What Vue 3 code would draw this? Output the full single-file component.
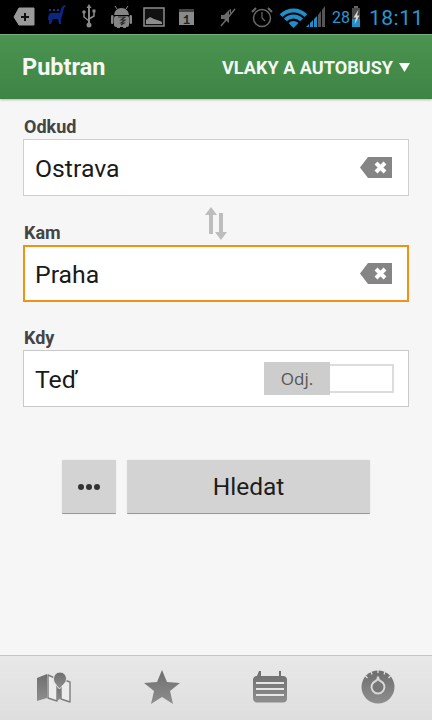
<script setup>
</script>

<template>
  <div class="app">
    <div class="status">
      <svg class="sb" width="432" height="34" viewBox="0 0 432 34">
        <!-- add -->
        <path d="M19 8h15v17H19l-5-8z" fill="#9a9a9a" stroke="#9a9a9a" stroke-width="1" stroke-linejoin="round"/>
        <path d="M25 13v8M21 17h8" stroke="#111" stroke-width="2"/>
        <!-- llama -->
        <path d="M48 20c0-4 1-7 3-7h9c1-3 1-6 3-7l1-1 2 1-2 2c-1 3-1 6-2 8l-1 3v5h-2l-1-5h-5l-2 5h-2l0-4z" fill="#0c2780"/>
        <path d="M49 10h2M53 10h2M57 10h2" stroke="#1d4cc0" stroke-width="1.5"/>
        <!-- usb -->
        <path d="M89 7v18" stroke="#8a8a8a" stroke-width="2"/>
        <path d="M89 4l-2.500 4h5z" fill="#8a8a8a"/>
        <path d="M89 21l-5-4v-4M89 19l5-3v-4" fill="none" stroke="#8a8a8a" stroke-width="1.500"/>
        <circle cx="84" cy="12" r="1.800" fill="#8a8a8a"/>
        <rect x="92.500" y="9.500" width="3" height="3" fill="#8a8a8a"/>
        <circle cx="89" cy="25" r="2.500" fill="#8a8a8a"/>
        <!-- android -->
        <path d="M114 15a7.500 7 0 0 1 15 0z" fill="#858585"/>
        <path d="M117 9l-2-3M126 9l2-3" stroke="#858585" stroke-width="1"/>
        <rect x="114" y="16" width="15" height="11" rx="2" fill="#858585"/>
        <rect x="111" y="15" width="2.500" height="9" rx="1.200" fill="#858585"/>
        <rect x="129.500" y="15" width="2.500" height="9" rx="1.200" fill="#858585"/>
        <rect x="117" y="26" width="3" height="2" fill="#858585"/>
        <rect x="123" y="26" width="3" height="2" fill="#858585"/>
        <path d="M118 17h7l-4 3h4l-4 3h3l-3 2" fill="none" stroke="#2a2a2a" stroke-width="1.200"/>
        <!-- picture -->
        <rect x="144" y="8" width="20" height="18" fill="#111" stroke="#8c8c8c" stroke-width="1.500"/>
        <path d="M146 24v-4l4-3 4 2 3 1 3 1 2 1v2z" fill="#8c8c8c"/>
        <!-- calendar -->
        <rect x="179" y="9" width="15" height="16" fill="#8a8a8a"/>
        <rect x="179" y="9" width="15" height="3" fill="#444"/>
        <text x="186.500" y="24" class="cal">1</text>
        <!-- muted -->
        <path d="M221 15h3l5-5v13l-5-4h-3z M229 10l2-1v6z" fill="#6a6a6a"/>
        <path d="M221 26l14-17" stroke="#6a6a6a" stroke-width="1.500"/>
        <!-- alarm -->
        <circle cx="262" cy="18" r="8.500" fill="none" stroke="#6a6a6a" stroke-width="1.500"/>
        <path d="M262 12v6l3 3" fill="none" stroke="#6a6a6a" stroke-width="1.200"/>
        <path d="M252 12l4-4M268 8l4 4" stroke="#6a6a6a" stroke-width="2"/>
        <!-- wifi -->
        <path d="M281.100 15.600A17.500 17.500 0 0 1 305.900 15.600" fill="none" stroke="#1f8ec9" stroke-width="4"/>
        <path d="M285.400 19.900A11.500 11.500 0 0 1 301.600 19.900" fill="none" stroke="#1f8ec9" stroke-width="4"/>
        <path d="M293.500 28L288.500 23A7 7 0 0 1 298.500 23z" fill="#1f8ec9"/>
        <!-- signal -->
        <path d="M306 27l3-3v3zM310 27v-4l3-3v7zM314 27v-8l3-3v11z" fill="#1f8ec9"/>
        <path d="M318 27V15l3-4v16zM322 27V10l3-4v21z" fill="#555"/>
        <!-- battery -->
        <rect x="354" y="6" width="4" height="2" fill="#666"/>
        <rect x="352" y="8" width="8" height="19" fill="#4a4a4a"/>
        <rect x="352" y="19" width="8" height="8" fill="#1f8ec9"/>
        <path d="M358.500 9.500l-5 8h2.500l-1.500 7 5-9h-2.500z" fill="#d8d8d8"/>
      </svg>
      <span class="pct">28</span>
      <span class="clock">18:11</span>
    </div>

    <header class="bar">
      <span class="title">Pubtran</span>
      <span class="mode">VLAKY A AUTOBUSY<svg width="11" height="9" viewBox="0 0 11 9"><path d="M0 0h11L5.500 9z" fill="#fff"/></svg></span>
    </header>

    <main class="form">
      <div class="label">Odkud</div>
      <div class="box">
        <span class="val">Ostrava</span>
        <svg class="clear" width="32" height="22" viewBox="0 0 32 22"><path d="M8 0h24v21H8L0 10.500z" fill="#858585"/><path d="M16 6l9 9M25 6l-9 9" stroke="#fff" stroke-width="4"/></svg>
      </div>
      <div class="swap">
        <svg width="24" height="33" viewBox="0 0 24 33">
          <path d="M7 0L1 8h4v19h4V8h4z" fill="#bdbdbd"/>
          <path d="M17 33l6-8h-4V6h-4v19h-4z" fill="#bdbdbd"/>
        </svg>
      </div>
      <div class="label kam">Kam</div>
      <div class="box focus">
        <span class="val">Praha</span>
        <svg class="clear" width="32" height="22" viewBox="0 0 32 22"><path d="M8 0h24v21H8L0 10.500z" fill="#858585"/><path d="M16 6l9 9M25 6l-9 9" stroke="#fff" stroke-width="4"/></svg>
      </div>
      <div class="label kdy">Kdy</div>
      <div class="box when">
        <span class="val">Teď</span>
        <div class="toggle"><span class="on">Odj.</span></div>
      </div>
      <div class="actions">
        <button class="btn more"><i></i><i></i><i></i></button>
        <button class="btn search">Hledat</button>
      </div>
    </main>

    <nav class="tabs">
      <div class="tab">
        <svg width="36" height="32" viewBox="0 0 36 32">
          <defs>
            <linearGradient id="ig" x1="0" y1="0" x2="0" y2="1"><stop offset="0" stop-color="#6e6e6e"/><stop offset="1" stop-color="#8e8e8e"/></linearGradient>
          </defs>
          <path d="M1 7l10-4v24l-10 3z" fill="url(#ig)"/>
          <path d="M12 4l9 4v22l-9-3z" fill="#ececec" stroke="#7d7d7d" stroke-width="1.400" stroke-linejoin="round"/>
          <path d="M21 18l4-4v13l-4 3z" fill="url(#ig)"/>
          <path d="M25 8l9 3v20l-9-3z" fill="#ececec" stroke="#7d7d7d" stroke-width="1.400" stroke-linejoin="round"/>
          <path d="M23.500 18c-3-4-6-6-6-10.500a6.500 6.500 0 0 1 13 0c0 4.500-4 6.500-7 10.500z" fill="url(#ig)" stroke="#e6e6e6" stroke-width="1"/>
        </svg>
      </div>
      <div class="tab">
        <svg width="36" height="34" viewBox="0 0 36 34">
          <path d="M18 0l5 12 13 1-10 8 3 13-11-7-11 7 3-13L0 13l13-1z" fill="url(#ig)"/>
        </svg>
      </div>
      <div class="tab">
        <svg width="34" height="32" viewBox="0 0 34 32">
          <path d="M6 0h2v5h18V0h2v5h2a4 4 0 0 1 4 3v20a4 4 0 0 1-4 3.500H4a4 4 0 0 1-4-3.500V8a4 4 0 0 1 4-3z" fill="url(#ig)"/>
          <path d="M3 12h28M3 18h28M3 24h28" stroke="#e6e6e6" stroke-width="1.800"/>
        </svg>
      </div>
      <div class="tab">
        <svg width="34" height="34" viewBox="0 0 34 34">
          <circle cx="17" cy="17" r="16.500" fill="url(#ig)"/>
          <path d="M17 0v3M10 1.500l1 3M24 1.500l-1 3M4.500 6l2 2M29.500 6l-2 2" stroke="#e6e6e6" stroke-width="1.200"/>
          <path d="M17 6.500c0 2.800-.8 3.800-2.400 4.500a6.500 6.500 0 1 0 4.800 0c-1.600-.7-2.400-1.700-2.400-4.500z" fill="#777" stroke="#d8d8d8" stroke-width="2"/>
        </svg>
      </div>
    </nav>
  </div>
</template>

<style scoped>
.app {
  width: 432px;
  height: 720px;
  display: flex;
  flex-direction: column;
  background: #f6f6f6;
  font-family: Roboto, "Liberation Sans", sans-serif;
  overflow: hidden;
}
.status {
  flex: 0 0 34px;
  background: #000;
  position: relative;
}
.sb { position: absolute; inset: 0; }
.cal { font: bold 12px "Liberation Mono", monospace; fill: #222; text-anchor: middle; }
.pct {
  position: absolute;
  left: 332px;
  top: 9px;
  font-size: 16px;
  line-height: 18px;
  color: #2a97d2;
}
.clock {
  position: absolute;
  left: 369px;
  top: 5px;
  font-size: 21px;
  line-height: 26px;
  letter-spacing: 0.500px;
  color: #2a97d2;
}
.bar {
  flex: 0 0 65px;
  box-sizing: border-box;
  display: flex;
  align-items: center;
  justify-content: space-between;
  padding: 0 22px;
  background: linear-gradient(#4a9350, #3f8444);
  border-top: 1px solid #76ad7a;
  box-shadow: 0 1px 2px rgba(0, 0, 0, .25);
  color: #f4f8f4;
  position: relative;
}
.title { font-size: 23.500px; font-weight: 700; }
.mode {
  font-size: 18.100px;
  font-weight: 700;
  display: flex;
  align-items: center;
  gap: 6px;
}
.form {
  flex: 1;
  padding: 18px 23px 0;
  display: flex;
  flex-direction: column;
  position: relative;
}
.label {
  font-size: 18px;
  font-weight: 700;
  line-height: 20px;
  color: #444;
  height: 22px;
  padding-left: 1px;
}
.kam { margin-top: 27px; }
.kdy { margin-top: 26px; }
.box {
  box-sizing: border-box;
  height: 57px;
  background: #fff;
  border: 1px solid #cfcfcf;
  display: flex;
  align-items: center;
  justify-content: space-between;
  padding: 0 16px 0 11px;
  width: 386px;
}
.focus { border: 2px solid #ee9313; padding: 0 15px 0 10px; }
.val { font-size: 24.800px; color: #1a1a1a; padding-top: 2px; }
.swap { position: absolute; left: 204px; top: 108px; line-height: 0; }
.when { padding-right: 14px; border-color: #c9c9c9; }
.toggle {
  box-sizing: border-box;
  width: 130px;
  height: 29px;
  border: 2px solid #dcdcdc;
  background: #fff;
  position: relative;
}
.on {
  position: absolute;
  left: -2px;
  top: -4px;
  width: 66px;
  height: 33px;
  background: #cdcdcd;
  color: #555;
  font: 17px/33px "Open Sans", sans-serif;
  text-align: center;
}
.actions {
  margin-top: 53px;
  padding-left: 39px;
  display: flex;
  gap: 11px;
}
.btn {
  height: 54px;
  border: 0;
  border-radius: 1px;
  border-bottom: 1px solid #9a9a9a;
  background: #d3d3d3;
  box-shadow: 0 0 1px rgba(0,0,0,.2);
  padding: 0;
  font-family: inherit;
  color: #1d1d1d;
}
.more {
  width: 54px;
  display: flex;
  align-items: center;
  justify-content: center;
  gap: 2px;
}
.more i {
  width: 6px;
  height: 6px;
  border-radius: 50%;
  background: #333;
}
.search { width: 243px; font-size: 24.500px; }
.tabs {
  flex: 0 0 65px;
  box-sizing: border-box;
  display: grid;
  grid-template-columns: repeat(4, 1fr);
  align-items: center;
  justify-items: center;
  padding: 0 0 2px;
  background: linear-gradient(#e8e8e8, #dedede);
  border-top: 1px solid #c4c4c4;
}
.tab { line-height: 0; }
</style>

<style>
html, body { margin: 0; background: #f6f6f6; }
</style>
